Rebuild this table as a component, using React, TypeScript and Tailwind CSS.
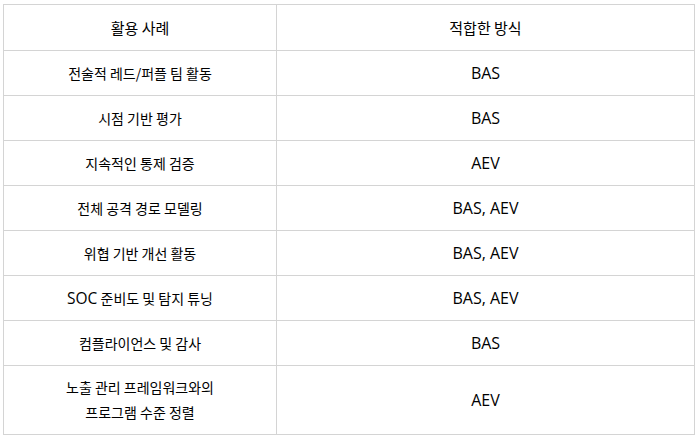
import React from 'react';

const rows: { useCase: React.ReactNode[]; method: string }[] = [
  { useCase: ['전술적 레드/퍼플 팀 활동'], method: 'BAS' },
  { useCase: ['시점 기반 평가'], method: 'BAS' },
  { useCase: ['지속적인 통제 검증'], method: 'AEV' },
  { useCase: ['전체 공격 경로 모델링'], method: 'BAS, AEV' },
  { useCase: ['위협 기반 개선 활동'], method: 'BAS, AEV' },
  {
    useCase: [
      <>
        <span className="font-['Open_Sans',sans-serif] text-[15.5px]">SOC</span> 준비도 및 탐지 튜닝
      </>,
    ],
    method: 'BAS, AEV',
  },
  { useCase: ['컴플라이언스 및 감사'], method: 'BAS' },
  { useCase: ['노출 관리 프레임워크와의', '프로그램 수준 정렬'], method: 'AEV' },
];

export default function App() {
  return (
    <div className="w-[699px] h-[437px] bg-white pl-[3px] pt-[4px] font-['Noto_Sans_CJK_KR','Noto_Sans',sans-serif] text-[14px] text-black">
      <table className="w-[692px] border-collapse table-fixed">
        <colgroup>
          <col className="w-[273px]" />
          <col />
        </colgroup>
        <thead>
          <tr className="h-[46px]">
            <th className="border border-[#d4d4d4] font-normal text-[15px] text-center leading-[25px]">활용 사례</th>
            <th className="border border-[#d4d4d4] font-normal text-[15px] text-center leading-[25px]">적합한 방식</th>
          </tr>
        </thead>
        <tbody>
          {rows.map((r, i) => (
            <tr key={i} className={r.useCase.length > 1 ? 'h-[69px]' : 'h-[45px]'}>
              <td className="border border-[#d4d4d4] text-center leading-[25px]">
                {r.useCase.map((line, j) => (
                  <div key={j}>{line}</div>
                ))}
              </td>
              <td className="border border-[#d4d4d4] text-center leading-[25px] font-['Open_Sans',sans-serif] text-[16px]">
                {r.method}
              </td>
            </tr>
          ))}
        </tbody>
      </table>
    </div>
  );
}
